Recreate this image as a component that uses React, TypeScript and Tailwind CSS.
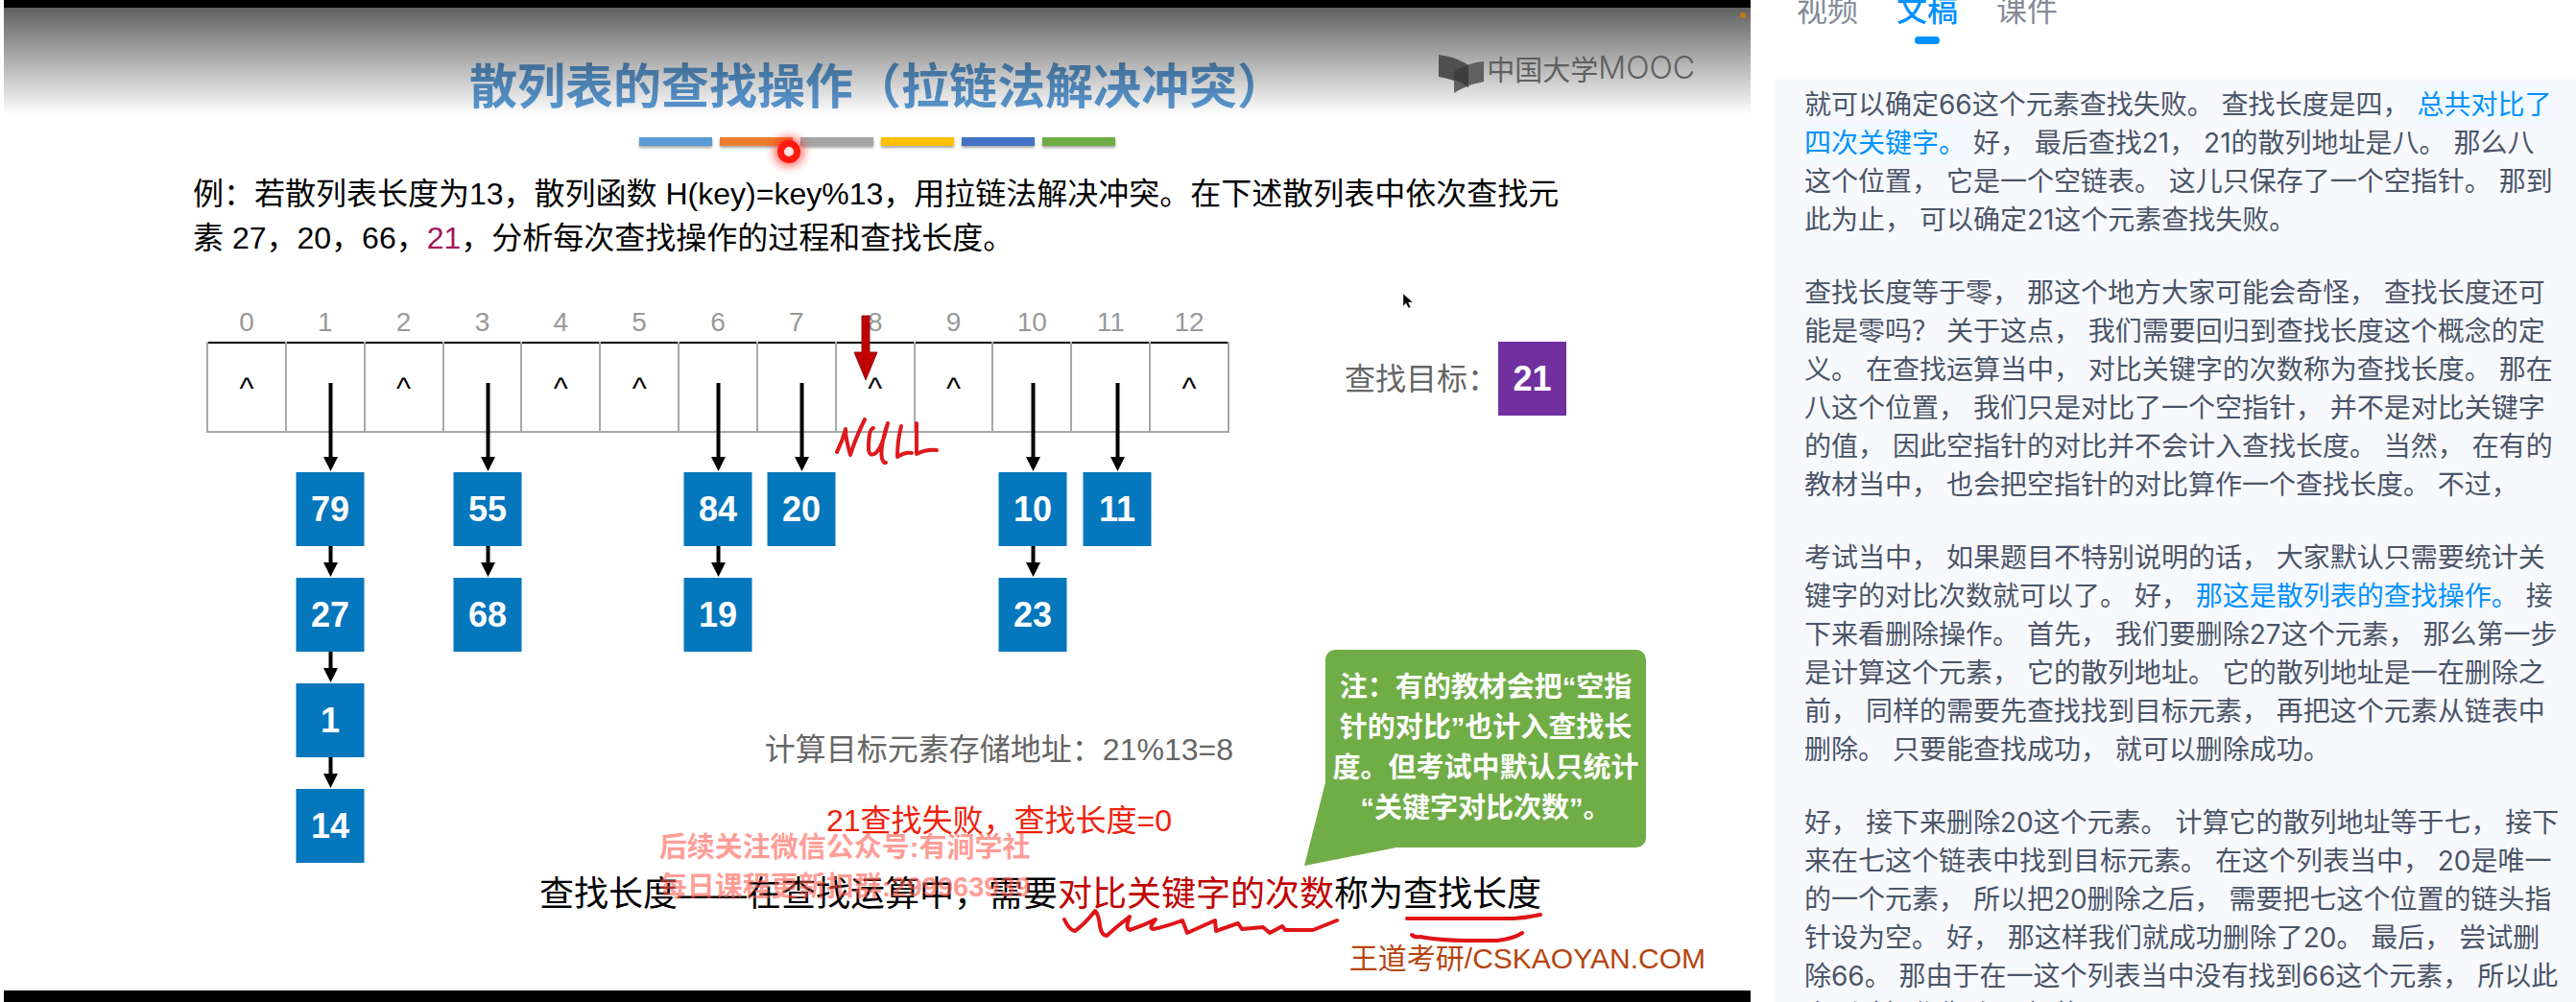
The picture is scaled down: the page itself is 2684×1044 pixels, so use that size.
import React from "react";

const LATIN = "font-['Liberation_Sans','Noto_Sans_CJK_SC',sans-serif]";

const ACCENTS = [
  "bg-[#5b9bd5]",
  "bg-[#ed7d31]",
  "bg-[#a5a5a5]",
  "bg-[#ffc000]",
  "bg-[#4472c4]",
  "bg-[#70ad47]",
];

const SLOTS = [0, 1, 2, 3, 4, 5, 6, 7, 8, 9, 10, 11, 12];

/* x is the centre of each chain, measured from the left edge of the table */
const CHAINS: { slot: number; x: number; keys: number[] }[] = [
  { slot: 1, x: 129, keys: [79, 27, 1, 14] },
  { slot: 3, x: 293, keys: [55, 68] },
  { slot: 6, x: 533, keys: [84, 19] },
  { slot: 7, x: 620, keys: [20] },
  { slot: 10, x: 861, keys: [10, 23] },
  { slot: 11, x: 949, keys: [11] },
];

function Arrow({ height }: { height: number }) {
  return (
    <svg width="16" height={height} viewBox={`0 0 16 ${height}`} className="block shrink-0">
      <rect x="6" y="0" width="4" height={height - 12} fill="#000" />
      <path d={`M0.5 ${height - 16}H15.5L8 ${height - 1}Z`} fill="#000" />
    </svg>
  );
}

function KeyBox({ value, tone }: { value: number; tone: string }) {
  return (
    <div
      className={`flex h-[77px] w-[71px] shrink-0 items-center justify-center font-['Liberation_Sans',sans-serif] text-[36px] font-bold leading-none text-white ${tone}`}
    >
      {value}
    </div>
  );
}

function HashTable() {
  return (
    <div className="relative w-[1066px] shrink-0">
      <table className="w-full table-fixed border-collapse font-['Liberation_Sans',sans-serif]">
        <thead>
          <tr className="h-10">
            {SLOTS.map((slot) => (
              <th key={slot} scope="col" className="p-0 text-[28px] font-normal leading-10 text-[#999]">
                {slot}
              </th>
            ))}
          </tr>
        </thead>
        <tbody>
          <tr className="h-[93px]">
            {SLOTS.map((slot) => (
              <td
                key={slot}
                className="border-2 border-[#a8a8a8] border-t-black p-0 text-center align-middle text-[32px] leading-none text-black"
              >
                {CHAINS.some((c) => c.slot === slot) ? "" : "^"}
              </td>
            ))}
          </tr>
        </tbody>
      </table>

      {CHAINS.map((chain) => (
        <div
          key={chain.slot}
          className="absolute top-[83px] flex -translate-x-1/2 flex-col items-center"
          style={{ left: chain.x }}
        >
          {chain.keys.map((key, i) => (
            <React.Fragment key={key}>
              <Arrow height={i === 0 ? 93 : 33} />
              <KeyBox value={key} tone="bg-[#0477bd]" />
            </React.Fragment>
          ))}
        </div>
      ))}

      <svg
        width="120"
        height="164"
        viewBox="0 0 120 164"
        className="absolute left-[650px] top-[10px] overflow-visible"
        aria-label="NULL"
      >
        <path d="M33 3H41V41H49L37 70L25 41H33Z" fill="#c00000" stroke="#8d1a1a" strokeWidth="1" />
        <g fill="none" stroke="#dd1a1c" strokeWidth="4" strokeLinecap="round" strokeLinejoin="round">
          <path d="M7 145C10 139 14 129 16 121C16 131 19 141 21 148C25 135 31 121 36 111" />
          <path d="M45 120C40 121 40 135 40 143Q41 149 46 147C53 143 57 127 60 115C56 125 52 144 54 152Q56 157 58 156" />
          <path d="M74 118Q70 133 70 150Q78 145 85 146" />
          <path d="M90 115V147Q100 142 111 143" />
        </g>
      </svg>
    </div>
  );
}

function MoocLogo() {
  return (
    <div className="absolute right-[58px] top-[37px] flex items-center gap-[2px] text-[#5f5f5f]">
      <svg width="48" height="40" viewBox="0 0 48 40" className="mt-3">
        <path d="M0 0Q18 2 31 11V34Q18 26 0 23Z" fill="#505050" />
        <path d="M16 18Q28 9 47 7V28Q30 31 16 40Z" fill="#606060" />
        <path d="M16 18Q22 13 31 11V34Q26 30 16 26Z" fill="#3d3d3d" />
      </svg>
      <span className="flex items-center leading-10">
        <span className="font-['Noto_Sans_CJK_SC',sans-serif] text-[29px]">中国大学</span>
        <span className="font-['Inter','Noto_Sans_CJK_SC',sans-serif] text-[32px] font-light">MOOC</span>
      </span>
    </div>
  );
}

function Callout() {
  return (
    <div className="relative h-[206px] w-[334px] shrink-0 rounded-[10px] bg-[#70ad47]">
      <svg width="96" height="88" viewBox="0 0 96 88" className="absolute -left-[22px] top-[138px]">
        <path d="M22 0V50H96V68L0 87Z" fill="#70ad47" />
      </svg>
      <p
        className={`relative whitespace-nowrap pt-[18px] text-center text-[29px] font-bold leading-[42px] text-white ${LATIN}`}
      >
        <span className="block">注：有的教材会把“空指</span>
        <span className="block">针的对比”也计入查找长</span>
        <span className="block">度。但考试中默认只统计</span>
        <span className="block">“关键字对比次数”。</span>
      </p>
    </div>
  );
}

function Slide() {
  return (
    <section
      className={`relative flex min-h-screen min-w-0 flex-col border-b-[12px] border-t-[8px] border-black bg-white text-black ${LATIN}`}
    >
      <header className="flex flex-col items-center pt-[46px]">
        <h1 className="whitespace-nowrap font-['Noto_Sans_CJK_SC',sans-serif] text-[50px] font-bold leading-[64px] text-[#5b9bd5]">
          散列表的查找操作（拉链法解决冲突）
        </h1>
        <div className="relative mt-[25px] flex gap-2">
          {ACCENTS.map((tone) => (
            <span key={tone} className={`h-[9px] w-[76px] shadow-[0_2px_3px_rgba(0,0,0,0.35)] ${tone}`} />
          ))}
          <span className="absolute left-[144px] top-[3px] flex size-[24px] items-center justify-center rounded-full bg-[#ff1a10] shadow-[0_0_10px_4px_rgba(255,30,20,0.6)]">
            <span className="size-[10px] rounded-full bg-[#ffe4e0]" />
          </span>
        </div>
      </header>
      <div className="pointer-events-none absolute inset-x-0 top-0 h-[112px] bg-linear-to-b from-black/62 to-transparent" />
      <MoocLogo />
      <span className="absolute right-[5px] top-[5px] h-[6px] w-[6px] rounded-full bg-[#c47a10]" />

      <p className="ml-[197px] mt-[27px] max-w-[1440px] text-[32px] leading-[46px]">
        例：若散列表长度为13，散列函数 H(key)=key%13，用拉链法解决冲突。在下述散列表中依次查找元素 27，20，66，
        <span className="text-[#a3195b]">21</span>，分析每次查找操作的过程和查找长度。
      </p>

      <div className="ml-[211px] mt-[45px] flex items-start gap-[120px]">
        <HashTable />
        <div className="relative flex items-center pt-10">
          <span className="text-[32px] leading-10 text-[#666]">查找目标：</span>
          <KeyBox value={21} tone="bg-[#7030a0]" />
          <svg width="12" height="17" viewBox="0 0 12 17" className="absolute -top-[11px] left-[60px]">
            <path d="M1 1V14L4 11L6.500 16L8.500 15L6.500 10H11Z" fill="#000" stroke="#ddd" strokeWidth="0.500" />
          </svg>
        </div>
      </div>

      <div className="mt-[226px] flex items-start justify-end pr-[109px]">
        <div className="relative mr-[96px] flex flex-col items-center gap-[26px] pt-[80px] text-[32px] leading-[48px]">
          <p className="text-[#666]">计算目标元素存储地址：21%13=8</p>
          <p className="text-[#ee220c]">21查找失败，查找长度=0</p>
          <p className="absolute -left-[110px] top-[186px] z-10 whitespace-nowrap text-[29px] font-bold leading-[41px] text-[#ff5a50]/60">
            后续关注微信公众号:有涧学社
            <br />
            每日课程更新扣群:299963939
          </p>
        </div>
        <Callout />
      </div>

      <p className="ml-[558px] mt-[25px] whitespace-nowrap text-[36px] leading-[48px]">
        查找长度——在查找运算中，需要
        <span className="relative text-[#c00000]">
          对比关键字的次数
          <svg width="292" height="32" viewBox="0 0 292 32" className="absolute left-1 top-[34px]">
            <path
              d="M3 13Q8 24 14 25Q24 18 35 4Q39 8 40 20Q42 30 47 30Q58 20 71 10Q66 22 71 24Q84 20 98 13Q90 23 96 23Q110 20 126 14L131 27L160 14L161 25L184 17L188 23L210 21L217 27L230 20L233 24H262L287 14"
              fill="none"
              stroke="#e01418"
              strokeWidth="4"
              strokeLinecap="round"
              strokeLinejoin="round"
            />
          </svg>
        </span>
        称为
        <span className="relative">
          查找长度
          <svg width="148" height="36" viewBox="0 0 148 36" className="absolute left-0 top-[37px]">
            <path
              d="M4 9H115Q130 8 143 5M9 26Q12 29 18 28Q40 32 68 32H98Q115 30 124 24"
              fill="none"
              stroke="#e01418"
              strokeWidth="4"
              strokeLinecap="round"
            />
          </svg>
        </span>
      </p>

      <footer className="mt-[23px] pr-[47px] text-right text-[30px] leading-[40px] text-[#b5450f]">
        王道考研/CSKAOYAN.COM
      </footer>
    </section>
  );
}

const TABS = ["视频", "文稿", "课件"];

function Mark({ children, shaded }: { children: React.ReactNode; shaded?: boolean }) {
  return (
    <span className={shaded ? "bg-[#f2faff] py-[3px] text-[#0091ff]" : "text-[#0091ff]"}>{children}</span>
  );
}

function Transcript() {
  return (
    <aside className="flex h-screen min-w-0 flex-col overflow-hidden bg-white pl-6 font-['Inter','Noto_Sans_CJK_SC',sans-serif]">
      <nav className="-mt-4 mb-9 flex gap-10 pl-6 text-[32px]">
        {TABS.map((tab) => (
          <button
            key={tab}
            type="button"
            className={`flex flex-col items-center leading-[54px] ${
              tab === "文稿" ? "font-medium text-[#0091ff]" : "text-[#848b99]"
            }`}
          >
            {tab}
            <span className={`h-2 w-[26px] rounded ${tab === "文稿" ? "bg-[#0091ff]" : ""}`} />
          </button>
        ))}
      </nav>
      <div className="flex min-h-0 flex-1 flex-col gap-9 overflow-hidden bg-[#f8f9fd] pl-8 pr-[14px] pt-[7px] text-[28px] leading-10 text-[#4a5568]">
        <p>
          就可以确定66这个元素查找失败。 查找长度是四， <Mark shaded>总共对比了四次关键字。 </Mark>好， 最后查找21， 21的散列地址是八。 那么八
          <span className="whitespace-nowrap">这个位置，</span> 它是一个空链表。 这儿只保存了一个空指针。 那到此为止，
          可以确定21这个元素查找失败。
        </p>
        <p>
          查找长度等于零， 那这个地方大家可能会奇怪， 查找长度还可能是零吗？ 关于这点， 我们需要回归到查找长度这个概念的定义。
          在查找运算当中， 对比关键字的次数称为查找长度。 那在八这个位置， 我们只是对比了一个空指针， 并不是对比关键字的值，
          因此空指针的对比并不会计入查找长度。 当然， 在有的教材当中， 也会把空指针的对比算作一个查找长度。 不过，
        </p>
        <p>
          考试当中， 如果题目不特别说明的话， 大家默认只需要统计关键字的对比次数就可以了。 好， <Mark>那这是散列表的查找操作。</Mark>{" "}
          接下来看删除操作。 首先， 我们要删除27这个元素， 那么第一步是计算这个元素， 它的散列地址。 它的散列地址是一在删除之前，
          同样的需要先查找找到目标元素， 再把这个元素从链表中删除。 只要能查找成功， 就可以删除成功。
        </p>
        <p>
          好， 接下来删除20这个元素。 计算它的散列地址等于七， 接下来在七这个链表中找到目标元素。 在这个列表当中， 20是唯一的一个元素，
          所以把20删除之后， 需要把七这个位置的链头指针设为空。 好， 那这样我们就成功删除了20。 最后， 尝试删除66。
          那由于在一这个列表当中没有找到66这个元素， 所以此次删除操作失败。 好的，
        </p>
      </div>
    </aside>
  );
}

export default function App() {
  return (
    <main className="grid min-h-screen grid-cols-[1820fr_860fr] overflow-hidden bg-white pl-1">
      <Slide />
      <Transcript />
    </main>
  );
}
